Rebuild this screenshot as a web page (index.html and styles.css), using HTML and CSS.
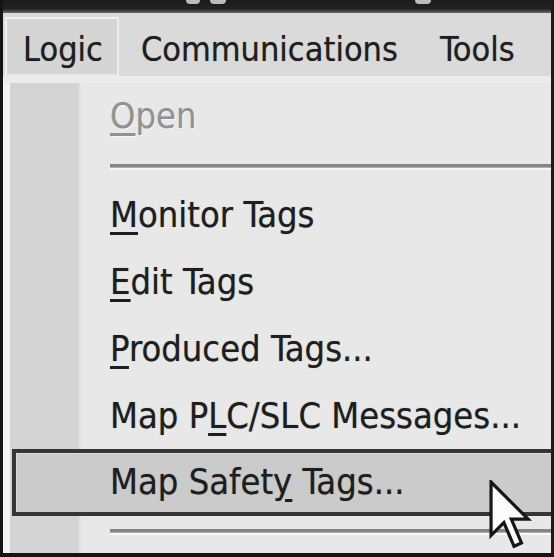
FILE: index.html
```html
<!DOCTYPE html>
<html lang="en">
<head>
    <meta charset="UTF-8">
    <title>Logic menu</title>
    <link rel="stylesheet" href="styles.css">
</head>
<body>
<div class="screen">
    <div class="titlebar">
        <span class="glint g1"></span>
        <span class="glint g2"></span>
        <span class="glint g3"></span>
    </div>

    <div class="menubar">
        <span class="top-item active">Logic</span>
        <span class="top-item">Communications</span>
        <span class="top-item">Tools</span>
    </div>

    <div class="dropdown">
        <ul class="items">
            <li class="item first disabled"><u>O</u>pen</li>
            <li class="sep"></li>
            <li class="item"><u>M</u>onitor Tags</li>
            <li class="item"><u>E</u>dit Tags</li>
            <li class="item"><u>P</u>roduced Tags...</li>
            <li class="item">Map P<u>L</u>C/SLC Messages...</li>
            <li class="item hover">Map Safet<u>y</u> Tags...
                <svg class="pointer" width="44" height="71" viewBox="0 0 13 21">
                    <path d="M0.6 0.6 L0.6 16.4 L4.4 12.6 L7.4 19.6 L9.6 18.6 L6.6 11.6 L11.6 11.6 Z"
                          fill="#fbfbfb" stroke="#161616" stroke-width="0.95" stroke-linejoin="miter"/>
                </svg>
            </li>
            <li class="sep last"></li>
        </ul>
    </div>
</div>
</body>
</html>
```

FILE: styles.css
```css
* {
    margin: 0;
    padding: 0;
    box-sizing: border-box;
}

ul {
    list-style: none;
}

body {
    width: 554px;
    height: 557px;
    overflow: hidden;
    background-color: #111;
    font-family: "DejaVu Sans Condensed", "DejaVu Sans", sans-serif;
    font-stretch: semi-condensed;
    font-size: 36px;
    color: #1e1e1e;
    text-shadow: 0 0 1px rgba(0, 0, 0, 0.45);
}

.screen {
    width: 554px;
    height: 557px;
    border-left: 3px solid #141414;
    border-right: 3px solid #1a1a1a;
    border-bottom: 4px solid #151515;
    background-color: #e7e7e7;
    display: flex;
    flex-direction: column;
}

/* dark strip of the window title above the menu */
.titlebar {
    height: 13px;
    position: relative;
    background: linear-gradient(to bottom, #1b1b1b 0, #222 9px, #6a6a6a 13px);
}

.glint {
    position: absolute;
    top: 0;
    height: 4px;
    border-radius: 0 0 8px 8px;
    background-color: #bcbcbc;
}

.g1 { left: 183px; width: 14px; }
.g2 { left: 207px; width: 16px; }
.g3 { left: 412px; width: 16px; }

.menubar {
    height: 70px;
    display: flex;
    align-items: flex-start;
    padding: 4px 0 0 2px;
    background-color: #dadada;
    border-bottom: 7px solid #ececec;
    font-size: 34px;
}

.top-item {
    height: 59px;
    padding: 6px 22px 0 16px;
    line-height: 49px;
    border: 2px solid transparent;
    white-space: nowrap;
}

.top-item.active {
    padding-right: 14px;
    margin-right: 4px;
    background-color: #d5d5d5;
    border-color: #f1f1f1 #eeeeee #e9e9e9 #f1f1f1;
}

.dropdown {
    flex: 1;
    background: linear-gradient(to right, #f3f3f3 0, #f3f3f3 7px, #d4d4d4 7px, #d4d4d4 75px, #dfdfdf 76px, #e8e8e8 79px);
}

.item {
    height: 67px;
    padding-left: 107px;
    line-height: 67px;
    white-space: nowrap;
}

.item.first {
    height: 66px;
    line-height: 66px;
}

.item u {
    text-decoration-thickness: 3px;
    text-underline-offset: 5px;
}

.item.disabled {
    color: #929292;
    text-shadow: 1px 1px 0 #f6f6f6, 0 0 1px rgba(0, 0, 0, 0.2);
}

.item.hover {
    position: relative;
    margin-left: 9px;
    padding-left: 94px;
    line-height: 57px;
    background-color: #cbcbcb;
    border: 4px solid #363636;
    border-right: none;
    box-shadow: inset 1px 1px 0 #dedede;
}

.pointer {
    position: absolute;
    left: 473px;
    top: 27px;
    z-index: 2;
}

.sep {
    height: 32px;
    margin-left: 107px;
    padding-top: 15px;
}

.sep::before {
    content: "";
    display: block;
    height: 3px;
    background-color: #858585;
    border-bottom: 1px solid #b0b0b0;
    box-shadow: 0 2px 0 #f7f7f7;
}

.sep.last {
    height: 31px;
    padding-top: 13px;
}
```
